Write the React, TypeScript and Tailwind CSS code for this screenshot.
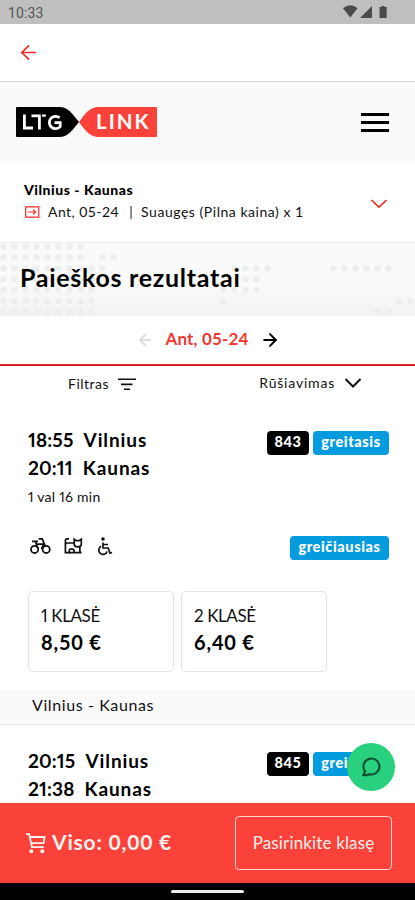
import { ArrowLeft, ArrowRight } from 'lucide-react'

// columns of the dotted map that are filled, row by row
const dotRows = [
  [0, 1, 2, 3, 4, 5, 6, 7],
  [0, 1, 2, 3, 4, 5, 6, 7, 9, 10],
  [0, 1, 2, 3, 4, 5, 6, 7, 8, 9, 21, 22, 23, 24, 30, 31, 32, 33, 34, 35],
  [0, 1, 2, 3, 4, 5, 6, 7, 8, 22, 23],
  [0, 1, 2, 3, 4, 5, 6, 7, 8, 20, 21, 22, 23],
  [0, 1, 2, 3, 4, 5, 6, 7, 8, 20, 36, 37],
  [0, 1, 2, 3, 4, 5, 6, 7, 8, 34, 35],
]

function StatusBar() {
  return (
    <div className="h-6 shrink-0 bg-[#bfbfbf] flex items-center justify-between pl-2 pr-[27px] text-[#555]">
      <span className="font-[Roboto] text-[14px] leading-none tracking-[0.1px] pt-0.5">10:33</span>
      <svg width="45" height="14" viewBox="0 0 45 14" fill="#4b4b4b">
        <path d="M0 3.2Q7.3 -2.5 14.6 3.2L7.3 12.6Z" />
        <path d="M29 1V13H17Z" />
        <path d="M36.5 2h2V1h3v1h2.2v11h-7.2Z" />
      </svg>
    </div>
  )
}

function Logo() {
  return (
    <svg width="142" height="30" viewBox="0 0 142 30">
      <path d="M1 0H43C53 0 56 7 63 15C56 23 53 30 43 30H1Q0 30 0 29V1Q0 0 1 0Z" fill="#000" />
      <path d="M140 0H83C73 0 69 7 63 15C69 23 73 30 83 30H140Q141 30 141 29V1Q141 0 140 0Z" fill="#fb423a" />
      {/* LTG mark has a joined, custom-cut T */}
      <g fill="none" stroke="#fff" strokeWidth="2.8">
        <path d="M8.4 7.5V21H17" />
        <path d="M15.5 8.9H24.8M23.4 8.9V22.4" />
        <path d="M26 8.6H29.8" strokeWidth="2.2" />
        <path d="M43.6 10.8A6.2 6.2 0 1 0 44.2 19.6V15.6H38.5" />
      </g>
      <text x="80" y="22" fill="#fff" fontFamily="Lato, sans-serif" fontWeight="700" fontSize="20.5" letterSpacing="2">LINK</text>
    </svg>
  )
}

function DotMap() {
  return (
    <svg className="absolute inset-0" width="415" height="73" fill="#eceef0">
      {dotRows.map((cols, row) =>
        cols.map((col) => (
          <circle key={`${row}-${col}`} cx={3.5 + col * 11} cy={3.5 + row * 10.9} r="3.2" />
        ))
      )}
    </svg>
  )
}

function BikeIcon() {
  return (
    <svg width="21" height="18" viewBox="0 0 21 18" fill="none" stroke="#111" strokeWidth="1.8">
      <circle cx="4.6" cy="12.4" r="3.6" />
      <circle cx="16.2" cy="12.4" r="3.6" />
      <path d="M2 4.4H8M5.4 4.4L6.4 7.2H13.6M6.4 7.2L8 11.5M8.6 1.9H12.2L15.2 9M13.6 7.2L11.5 12" />
    </svg>
  )
}

function PetIcon() {
  return (
    <svg width="19" height="18" viewBox="0 0 19 18" fill="none" stroke="#111" strokeWidth="1.7">
      <path d="M5 1.9H3.2Q1.4 1.9 1.4 3.7V15.6H5.3V12.6M1.4 8Q1.4 6 3.5 6H10" />
      <path d="M10.2 2.2L12.2 3.6H15.3L17.3 2.2V7.2Q17.3 9.6 13.8 9.9Q10.2 9.6 10.2 7.2Z" />
      <path d="M5.3 12.2H8.5Q10 12.2 10 13.5V15.6H17.6M15.9 9.4V15.6M5 15.6H11" />
    </svg>
  )
}

function WheelchairIcon() {
  return (
    <svg width="15" height="19" viewBox="0 0 15 19" fill="none" stroke="#111" strokeWidth="1.7">
      <circle cx="5" cy="2" r="1.8" fill="#111" stroke="none" />
      <path d="M5 5.5V11H10.3L12 16.2L14 15.5M5 7.5H10" />
      <path d="M3.2 9.3A4.3 4.3 0 1 0 9.2 14.5" />
    </svg>
  )
}

interface TripProps {
  departs: string
  arrives: string
  number: string
}

function Stop({ time, city }: { time: string; city: string }) {
  return (
    <div className="flex gap-2.5">
      <span className="proportional-nums tracking-[0.15px]">{time}</span>
      <span className="tracking-[0.9px]">{city}</span>
    </div>
  )
}

function TripHeader({ departs, arrives, number }: TripProps) {
  return (
    <div className="flex justify-between items-start pl-7 pr-[26px]">
      <div className="text-[19px] leading-7 font-bold text-black">
        <Stop time={departs} city="Vilnius" />
        <Stop time={arrives} city="Kaunas" />
      </div>
      <div className="flex gap-1 pt-[5px]">
        <Badge className="bg-black w-[42px]">{number}</Badge>
        <Badge className="bg-[#049bdf] w-[76px]">greitasis</Badge>
      </div>
    </div>
  )
}

function Badge({ className, children }: { className: string; children: string }) {
  return (
    <span className={`h-6 rounded-[4px] flex justify-center text-white text-[14.5px] leading-[22px] font-black tracking-[0.6px] ${className}`}>
      {children}
    </span>
  )
}

function ClassCard({ name, price }: { name: string; price: string }) {
  return (
    <div className="w-[146px] h-[81px] rounded-[5px] border border-[#e2e3e6] pl-3 pt-3">
      <div className="text-[17px] leading-6 tracking-[-0.4px] proportional-nums">{name}</div>
      <div className="text-[20px] leading-7 font-bold tracking-[0.8px] text-black">{price}</div>
    </div>
  )
}

export default function App() {
  return (
    <div className="relative w-[415px] h-[900px] overflow-hidden bg-white text-[#111] font-[Lato,sans-serif] flex flex-col">
      <StatusBar />

      <div className="h-[58px] shrink-0 border-b border-[#d3d3d3] flex items-center pl-[17px]">
        <ArrowLeft className="w-[23px] h-[23px] text-[#ee2b24]" strokeWidth={1.8} />
      </div>

      <header className="h-[79px] shrink-0 bg-[#fafafa] flex items-center justify-between pl-4 pr-[26px]">
        <Logo />
        <div className="flex flex-col gap-[5px] pt-0.5">
          <span className="w-7 h-[3px] bg-black" />
          <span className="w-7 h-[3px] bg-black" />
          <span className="w-7 h-[3px] bg-black" />
        </div>
      </header>

      {/* Search summary */}
      <section className="h-[82px] shrink-0 border-b border-[#ebecef] flex justify-between pl-6 pr-[26px]">
        <div className="pt-[18px]">
          <div className="text-[14px] leading-[22px] font-black tracking-[0.53px] text-black">Vilnius - Kaunas</div>
          <div className="flex items-center text-[14px] leading-[22px] tracking-[0.45px]">
            <svg className="mr-2" width="16" height="12" viewBox="0 0 16 12" fill="none" stroke="#ee2b24" strokeWidth="1.2">
              <path d="M1.7 .9H14.8V11.1H1.7ZM4 6H11.5M9 3.6L11.6 6L9 8.4" />
            </svg>
            <span>Ant, 05-24</span>
            <span className="ml-2.5 mr-2">|</span>
            <span className="tracking-[0.53px]">Suaugęs (Pilna kaina) x 1</span>
          </div>
        </div>
        <svg className="mt-[37px]" width="20" height="12" fill="none" stroke="#ee2b24" strokeWidth="1.7">
          <path d="M2.5 2L10 9L17.5 2" />
        </svg>
      </section>

      <section className="relative h-[73px] shrink-0 bg-linear-to-b from-[#fafafa] from-60% to-[#f2f2f2]">
        <DotMap />
        <h1 className="relative pl-5 pt-4 text-[25px] leading-9 font-bold tracking-[0.72px] text-black">Paieškos rezultatai</h1>
      </section>

      {/* Day switcher */}
      <div className="h-[50px] shrink-0 border-b-2 border-[#d8232a] flex items-center justify-center gap-3 pl-px">
        <ArrowLeft className="w-[18px] h-[18px] text-[#d9dce2]" strokeWidth={2.4} />
        <span className="text-[17px] leading-6 font-bold tracking-[0.15px] text-[#ee3a32] pb-[3px]">Ant, 05-24</span>
        <ArrowRight className="w-5 h-5 text-black" strokeWidth={2.4} />
      </div>

      <div className="h-[60px] shrink-0 flex justify-between pl-[68px] pr-[53px] text-[14px] leading-5 tracking-[0.5px]">
        <div className="flex items-start pt-2">
          <span>Filtras</span>
          <svg className="ml-[9px] mt-[3px]" width="18" height="14" stroke="#111" strokeWidth="1.6">
            <path d="M0 2.2H18M3 7.4H14.5M6 12.2H12" />
          </svg>
        </div>
        <div className="flex items-start pt-[7px]">
          <span className="tracking-[0.8px]">Rūšiavimas</span>
          <svg className="ml-[9px]" width="18" height="20" fill="none" stroke="#111" strokeWidth="2">
            <path d="M1.5 6L9 13.5L16.5 6" />
          </svg>
        </div>
      </div>

      <TripHeader departs="18:55" arrives="20:11" number="843" />
      <div className="pl-7 pt-[5px] text-[14px] leading-5 tracking-[0.25px] proportional-nums">1 val 16 min</div>

      <div className="flex items-start justify-between pl-[30px] pr-[26px] pt-[29px]">
        <div className="flex items-start gap-[13px] pt-px">
          <BikeIcon />
          <PetIcon />
          <div className="pl-0.5">
            <WheelchairIcon />
          </div>
        </div>
        <Badge className="bg-[#049bdf] w-[99px]">greičiausias</Badge>
      </div>

      <div className="flex gap-[7px] pl-7 pt-[31px]">
        <ClassCard name="1 KLASĖ" price="8,50 €" />
        <ClassCard name="2 KLASĖ" price="6,40 €" />
      </div>

      <div className="mt-[18px] h-[35px] shrink-0 bg-[#fafafa] border-b border-[#e4e4e4] pl-8 text-[16px] leading-[30px] tracking-[0.6px]">
        Vilnius - Kaunas
      </div>

      <div className="pt-[22px] h-[78px] shrink-0 overflow-hidden">
        <TripHeader departs="20:15" arrives="21:38" number="845" />
      </div>

      {/* Cart footer */}
      <footer className="h-[80px] shrink-0 bg-[#fb423a] text-[#fff1ee] flex items-center justify-between pl-[26px] pr-[23px]">
        <div className="flex items-center">
          <svg width="20" height="22" viewBox="0 0 20 22" fill="none" stroke="#fff1ee" strokeWidth="1.8">
            <path d="M0 2.2H3.2L6 15.2H18M4 5H18.6L17.6 11.2H5.2" />
            <circle cx="5.3" cy="19.3" r="2" fill="#fff1ee" stroke="none" />
            <circle cx="16.3" cy="19.3" r="2" fill="#fff1ee" stroke="none" />
          </svg>
          <span className="ml-1.5 pb-0.5 text-[21px] leading-7 font-bold tracking-[0.8px]">Viso: 0,00 €</span>
        </div>
        <button className="w-[157px] h-[54px] rounded-[4px] border border-[#ffd5d0] text-[17px] tracking-[0.15px]">
          Pasirinkite klasę
        </button>
      </footer>

      <div className="flex-1 bg-black flex justify-center pt-[7px]">
        <span className="w-[73px] h-[3px] rounded-full bg-[#eee]" />
      </div>

      {/* Chat bubble floats above the list */}
      <div className="absolute left-[347px] top-[743px] w-12 h-12 rounded-full bg-[#29d07e] flex items-center justify-center">
        <svg width="22" height="22" viewBox="0 0 22 22" fill="none" stroke="#0b4f32" strokeWidth="2.1">
          <path d="M3.2 19.2L5.2 15.5A8 8 0 1 1 9.3 18.2Q6.5 19.6 3.2 19.2Z" strokeLinejoin="round" />
        </svg>
      </div>
    </div>
  )
}
